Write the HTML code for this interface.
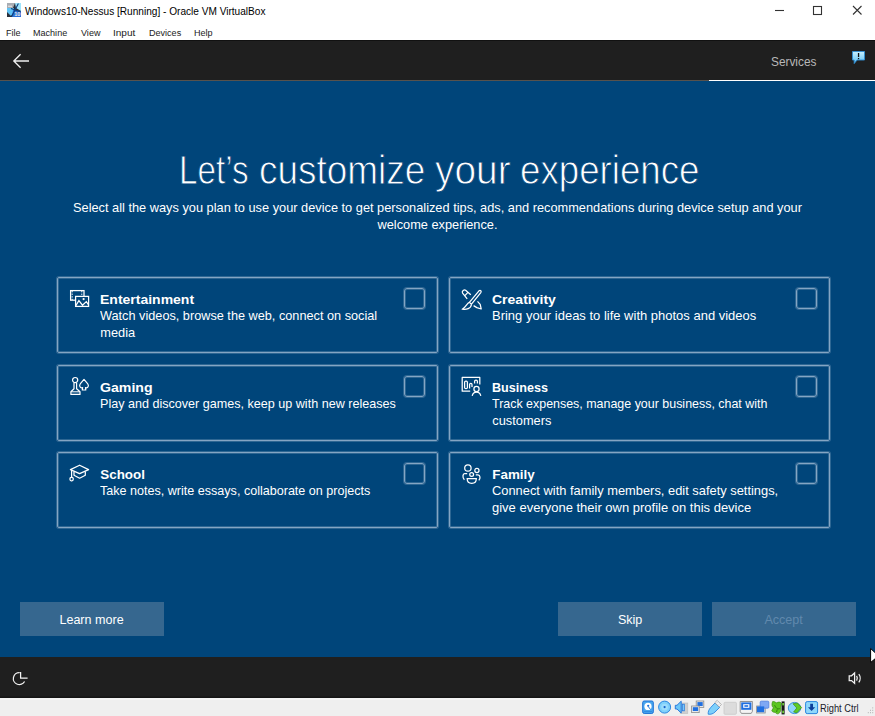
<!DOCTYPE html>
<html><head><meta charset="utf-8">
<style>
*{margin:0;padding:0;box-sizing:border-box}
html,body{width:875px;height:716px;overflow:hidden;background:#fff;font-family:"Liberation Sans",sans-serif}
.abs{position:absolute}
.t{position:absolute;white-space:nowrap;line-height:1}
#titlebar{left:0;top:0;width:875px;height:22px;background:#fff}
#menubar{left:0;top:22px;width:875px;height:18px;background:#fff}
#topdark{left:0;top:40px;width:875px;height:40px;background:#1f1f1f;border-top:1px solid #111}
#prog1{left:0;top:80px;width:709px;height:1px;background:#57524d}
#prog2{left:709.5px;top:79.6px;width:166px;height:2.2px;background:#fff}
#blue{left:0;top:81px;width:875px;height:576px;background:#00457a}
#botdark{left:0;top:657px;width:875px;height:41px;background:#1f1f1f;box-shadow:inset 0 -1.5px #161616}
#status{left:0;top:698px;width:875px;height:18px;background:#efefef;border-top:2px solid #f5f5f5}
.menu{font-size:9.05px;color:#222;top:29px}
.card{position:absolute;width:381px;height:76px;border:1px solid #84a5c3;border-radius:2px;box-shadow:0 0 0 1px rgba(132,165,195,.35),inset 0 0 0 1px rgba(132,165,195,.35)}
.card .cb{position:absolute;left:346.3px;top:10.4px;width:20.6px;height:20.6px;border:1px solid #84a5c3;border-radius:3px;box-shadow:0 0 0 1px rgba(132,165,195,.35),inset 0 0 0 1px rgba(132,165,195,.35)}
.card .ic{position:absolute;left:12px;top:12px;width:22px;height:20px;overflow:visible}
.card .ttl{position:absolute;transform-origin:0 0;left:42.3px;top:12.8px;font-size:13.4px;font-weight:bold;color:#fff;white-space:nowrap;line-height:17px}
.card .dsc div{transform-origin:0 0}
.card .dsc{position:absolute;left:42.3px;top:29.4px;white-space:nowrap;font-size:12.8px;color:#fff;line-height:17px}
.h1{top:149px;font-size:41.5px;color:#fff;transform-origin:0 0;-webkit-text-stroke:0.9px #00457a}
.btn{position:absolute;top:602px;width:144px;height:34px;background:#36678f;color:#fff;font-size:13.5px;text-align:center;line-height:34px}
.btn span{display:inline-block;transform:translateY(1.3px) scaleX(0.93)}
</style></head><body>
<div id="titlebar" class="abs"></div>
<div id="menubar" class="abs"></div>
<div id="topdark" class="abs"></div>
<div id="prog1" class="abs"></div>
<div id="prog2" class="abs"></div>
<div id="blue" class="abs"></div>
<div id="botdark" class="abs"></div>
<div id="status" class="abs"></div>

<!-- title bar -->
<svg class="abs" style="left:7px;top:3px" width="14" height="14" viewBox="0 0 14 14">
  <rect x="0" y="0" width="14" height="14" fill="#2a2f3a"/>
  <path d="M0 0 H8 L6 5 H0 Z" fill="#a9adb3"/>
  <path d="M1 3.2 H5" stroke="#fff" stroke-width=".8"/>
  <path d="M0 5 H7 L6 10 L4 13 L0 9 Z" fill="#5fc3f6"/>
  <path d="M8 0 H14 V8 L9 5 Z" fill="#9fe4fb"/>
  <path d="M6 7 L14 8 V14 H5 Z" fill="#2a6fd6"/>
  <path d="M4.6 13.5 L11.4 0.5 M4 5.6 L13.6 9" stroke="#0f3f7e" stroke-width="1.1"/>
  <text x="7.2" y="12.6" font-family="Liberation Sans" font-size="5.6" font-weight="bold" fill="#e8e8e8">10</text>
</svg>
<div class="t" style="left:25px;top:6.9px;font-size:10.1px;color:#000">Windows10-Nessus [Running] - Oracle VM VirtualBox</div>
<svg class="abs" style="left:774px;top:5px" width="90" height="12" viewBox="0 0 90 12">
  <path d="M1 5.5 H10" stroke="#333" stroke-width="1.1"/>
  <rect x="39.5" y="1.5" width="8" height="8" fill="none" stroke="#333" stroke-width="1.1"/>
  <path d="M79 1 L87.5 9.5 M87.5 1 L79 9.5" stroke="#333" stroke-width="1.1"/>
</svg>

<!-- menu -->
<div class="t menu" style="left:6px">File</div>
<div class="t menu" style="left:33px">Machine</div>
<div class="t menu" style="left:81px">View</div>
<div class="t menu" style="left:113.4px;transform-origin:0 0;transform:scaleX(1.11)">Input</div>
<div class="t menu" style="left:149px">Devices</div>
<div class="t menu" style="left:194px">Help</div>

<!-- top dark bar -->
<svg class="abs" style="left:11.7px;top:53px" width="18" height="16" viewBox="0 0 18 16">
  <path d="M17 8 H2 M8.6 1.2 L1.8 8 L8.6 14.8" fill="none" stroke="#f0f0f0" stroke-width="1.3"/>
</svg>
<div class="t" style="left:770.6px;top:56.2px;font-size:12.6px;color:#b8b8b8;transform-origin:0 0;transform:scaleX(0.94)">Services</div>
<svg class="abs" style="left:851px;top:50px" width="15" height="15" viewBox="0 0 15 15">
  <defs><linearGradient id="fb" x1="0" y1="0" x2="0" y2="1"><stop offset="0" stop-color="#c8f0ff"/><stop offset="1" stop-color="#58bdf2"/></linearGradient></defs>
  <path d="M1.5 1.5 H13.5 V10 H6 L3.2 13.6 V10 H1.5 Z" fill="url(#fb)" stroke="#2f8fd6" stroke-width="0.9"/>
  <rect x="6.9" y="3" width="1.3" height="4" fill="#111"/>
  <rect x="6.9" y="8" width="1.3" height="1.2" fill="#111"/>
</svg>

<!-- heading -->
<div class="t h1" style="left:178.8px;transform:scaleX(0.800)">Let’s</div><div class="t h1" style="left:259.2px;transform:scaleX(0.890)">customize</div><div class="t h1" style="left:435.1px;transform:scaleX(0.937)">your</div><div class="t h1" style="left:520.2px;transform:scaleX(0.884)">experience</div>
<div class="t" style="left:0;width:875px;text-align:center;top:198.6px;font-size:12.79px;color:#fff;line-height:17px;white-space:normal;padding:0 70px">Select all the ways you plan to use your device to get personalized tips, ads, and recommendations during device setup and your welcome experience.</div>

<!-- cards -->
<div class="card" style="left:57px;top:277px">
  <svg class="ic" viewBox="0 0 22 20"><g fill="none" stroke="#fff" stroke-width="1.25">
    <rect x="0.6" y="0.6" width="13.4" height="9.6"/><path d="M2.2 1 V10 M11.8 1 V10" stroke-dasharray="1.3 1.3" stroke-width="1"/>
    <rect x="5.6" y="6.4" width="13" height="10" fill="#00457a"/><path d="M5.8 15.6 L8.9 10.6 L12.5 15.2 L16.3 11.6 L18.4 14.6"/><circle cx="13.6" cy="9" r="0.5"/>
  </g></svg>
  <div class="ttl" style="transform:scaleX(1.045)">Entertainment</div>
  <div class="dsc"><div style="transform:scaleX(0.993)">Watch videos, browse the web, connect on social</div><div style="transform:scaleX(1.000)">media</div></div>
  <div class="cb"></div>
</div>
<div class="card" style="left:449px;top:277px">
  <svg class="ic" viewBox="0 0 22 20"><g fill="none" stroke="#fff" stroke-width="1.25" stroke-linejoin="round">
    <path d="M8.8 4.8 L3.6 0.2 C2.2 -1 -0.6 1.4 0.6 3.2 L5.2 8.8 M2.9 5.6 L5.9 2.4"/>
    <path d="M15.5 11.4 L18.2 14.4 L19.2 19 L14.8 17.6 L11.6 15.6"/>
    <path d="M9.5 14.2 L18.8 2.6 C19.8 1.2 18.4 -0.4 17 0.8 L7.4 12.4 Z" fill="#00457a"/>
    <path d="M7.4 12.4 C4.6 13.4 4.2 17.4 0.2 19.2 C4.4 19.8 9 18.6 9.5 14.2"/>
  </g></svg>
  <div class="ttl" style="transform:scaleX(1.046)">Creativity</div>
  <div class="dsc"><div style="transform:scaleX(1.015)">Bring your ideas to life with photos and videos</div></div>
  <div class="cb"></div>
</div>
<div class="card" style="left:57px;top:365px">
  <svg class="ic" viewBox="0 0 22 20"><g fill="none" stroke="#fff" stroke-width="1.2" stroke-linejoin="round">
    <circle cx="5.15" cy="2.1" r="2.6"/>
    <path d="M4 4.7 V10.8 L0.9 13.8 V16.4 H10 V13.8 L6.6 10.8 V4.7"/><path d="M1 13.8 H10" stroke-width="1"/>
    <path d="M14 1.4 L10.4 5.6 C8.6 7.8 10.4 10.6 12.6 9.6 L12.3 12 H15.8 L15.5 9.6 C17.8 10.6 19.4 7.8 17.6 5.6 Z"/>
  </g></svg>
  <div class="ttl" style="transform:scaleX(1.055)">Gaming</div>
  <div class="dsc"><div style="transform:scaleX(0.983)">Play and discover games, keep up with new releases</div></div>
  <div class="cb"></div>
</div>
<div class="card" style="left:449px;top:365px">
  <svg class="ic" viewBox="0 0 22 20"><g fill="none" stroke="#fff" stroke-width="1.25" stroke-linejoin="round">
    <path d="M8.2 13.2 H0.2 V-0.6 H17.8 V6.6"/>
    <rect x="2.6" y="3" width="2.8" height="7.6" rx="1.2"/><path d="M7.6 10.4 V6.6 C7.6 5 10 5 10 6.6 V9"/><path d="M12.6 5.6 V3.2 C12.6 1.6 15.4 1.6 15.4 3.2 V5.6"/>
    <circle cx="14.5" cy="10.9" r="2.6"/><path d="M10.2 17.8 C10.8 15.4 12.4 14.2 14.5 14.2 C16.6 14.2 18.2 15.4 18.8 17.8"/>
  </g></svg>
  <div class="ttl" style="transform:scaleX(0.940)">Business</div>
  <div class="dsc"><div style="transform:scaleX(0.972)">Track expenses, manage your business, chat with</div><div style="transform:scaleX(1.000)">customers</div></div>
  <div class="cb"></div>
</div>
<div class="card" style="left:57px;top:452px">
  <svg class="ic" viewBox="0 0 22 20"><g fill="none" stroke="#fff" stroke-width="1.25" stroke-linejoin="round">
    <path d="M0.4 4.6 L9.6 0.2 L18.6 4.6 L9.6 8.6 Z"/>
    <path d="M4 6.4 V10.2 L9.6 13.2 L15.3 10.2 V6.4"/>
    <path d="M1.6 4.8 V12.4"/><rect x="0" y="12.4" width="3.2" height="3.4" rx="1.2"/>
  </g></svg>
  <div class="ttl" style="transform:scaleX(1.000)">School</div>
  <div class="dsc"><div style="transform:scaleX(0.982)">Take notes, write essays, collaborate on projects</div></div>
  <div class="cb"></div>
</div>
<div class="card" style="left:449px;top:452px">
  <svg class="ic" viewBox="0 0 22 20"><g fill="none" stroke="#fff" stroke-width="1.25">
    <circle cx="5.9" cy="3" r="3.2"/><circle cx="14.9" cy="5.5" r="2.1"/><circle cx="9.65" cy="9.4" r="1.9"/>
    <path d="M5.2 8.5 H3 C0.6 8.6 0.2 12.6 2.4 14.8"/><path d="M13.8 9.9 H16 C18.4 10 18.6 13.6 16.8 15.4"/>
    <path d="M5.2 13.7 H14.3 C14.3 19.8 5.2 19.8 5.2 13.7 Z"/>
  </g></svg>
  <div class="ttl" style="transform:scaleX(1.000)">Family</div>
  <div class="dsc"><div style="transform:scaleX(1.006)">Connect with family members, edit safety settings,</div><div style="transform:scaleX(1.015)">give everyone their own profile on this device</div></div>
  <div class="cb"></div>
</div>

<!-- buttons -->
<div class="btn" style="left:20px"><span>Learn more</span></div>
<div class="btn" style="left:558px"><span>Skip</span></div>
<div class="btn" style="left:712px;color:#6189ad"><span>Accept</span></div>

<!-- bottom dark bar icons -->
<svg class="abs" style="left:10px;top:668px" width="20" height="20" viewBox="0 0 20 20">
  <g fill="none" stroke="#f2f2f2" stroke-width="1.25"><path d="M9.7 4.6 A6 6 0 1 0 14.6 13.5"/><path d="M10.6 4 V10.2 H17.6"/></g>
</svg>
<svg class="abs" style="left:846px;top:670px" width="18" height="16" viewBox="0 0 18 16">
  <g fill="none" stroke="#f2f2f2" stroke-width="1.25"><path d="M3.2 5.8 H5.5 L8.6 3 V13.3 L5.5 10.6 H3.2 Z"/><path d="M10.6 5.8 C11.5 7.2 11.5 9.2 10.6 10.6 M12.8 4.2 C14.6 6.5 14.6 10 12.8 12.3"/></g>
</svg>
<svg class="abs" style="left:869px;top:647px" width="6" height="17" viewBox="0 0 6 17"><path d="M1.6 1.5 L7 6.5 V11 L1.6 15.5 Z" fill="#fff" stroke="#000" stroke-width="1"/></svg>

<!-- status bar icons -->
<svg class="abs" style="left:640px;top:699px" width="235" height="17" viewBox="0 0 235 17">
  <!-- HDD -->
  <rect x="2.7" y="2" width="10.6" height="12.4" rx="1.5" fill="#49a6ee" stroke="#1a6fd6" stroke-width="1"/>
  <circle cx="8" cy="7.4" r="3.6" fill="#fff"/><circle cx="8.2" cy="6.8" r="1.1" fill="#1a6fd6"/>
  <path d="M8.6 8 L10.6 10.6" stroke="#1a6fd6" stroke-width="0.9"/>
  <rect x="4" y="12" width="8" height="1" fill="#1a6fd6" opacity=".5"/>
  <!-- CD -->
  <circle cx="24.6" cy="8.1" r="6" fill="#7fd0fb" stroke="#2a85e0" stroke-width="1"/>
  <circle cx="24.6" cy="8.1" r="3.4" fill="#9cdcfc"/><circle cx="24.6" cy="8.1" r="1.1" fill="#1560c8"/>
  <!-- Audio -->
  <rect x="40.2" y="4" width="7.6" height="10.5" fill="#cfcfcf" stroke="#bdbdbd" stroke-width=".6"/>
  <path d="M35.3 6.3 H37 L41.2 2.2 V14 L37 10 H35.3 Z" fill="#6cc6f7" stroke="#2878dc" stroke-width="1"/>
  <rect x="42.3" y="5.2" width="2" height="6.6" fill="#7fd2fb" stroke="#2878dc" stroke-width=".8"/>
  <!-- Network -->
  <rect x="56.2" y="2" width="7.6" height="6.4" fill="#e8e8e8" stroke="#8c8c8c" stroke-width=".8"/><rect x="57.4" y="3.1" width="5.3" height="3.9" fill="#1f6fe0"/>
  <rect x="51.6" y="7" width="7.6" height="6.6" fill="#e8e8e8" stroke="#8c8c8c" stroke-width=".8"/><rect x="52.8" y="8.2" width="5.3" height="3.8" fill="#1f6fe0"/>
  <!-- USB -->
  <path d="M68.2 15.2 C68 12.6 68.8 10.6 70.6 8.6 L75 4 L79.6 8.4 L75 13 C73.2 14.8 70.8 15.6 68.2 15.2 Z" fill="#7dd0fb" stroke="#2a86e0" stroke-width=".9"/>
  <path d="M74.8 3.6 L77.2 1.4 L81.4 5.6 L79.2 7.8 Z" fill="#f6f6f6" stroke="#9a9a9a" stroke-width=".7"/>
  <path d="M77 3.6 L77.6 3 M79 5.4 L79.6 4.8" stroke="#888" stroke-width=".6"/>
  <!-- shared folder -->
  <rect x="84" y="3.3" width="12.4" height="12" rx="1" fill="#dcdcdc" stroke="#c9c9c9" stroke-width=".8"/>
  <!-- display -->
  <path d="M100.2 2.5 H112.4 V12.4 L111.2 14.4 H101.4 L100.2 12.4 Z" fill="#f4f4f4" stroke="#7c7c7c" stroke-width=".8"/>
  <rect x="101.2" y="3.4" width="10.2" height="7.4" fill="#1f6fe0"/><rect x="103.2" y="5.2" width="6.2" height="3.6" fill="#fff"/><rect x="104.4" y="6.2" width="3.8" height="1.6" fill="#1f6fe0"/>
  <!-- video capture -->
  <rect x="116.6" y="7" width="8.6" height="7" fill="#e4e4e4" stroke="#8c8c8c" stroke-width=".8"/>
  <rect x="120.2" y="2.2" width="8.6" height="7" rx="1" fill="#7fa8f4" stroke="#4f7fe0" stroke-width=".8"/>
  <rect x="117" y="7.4" width="7.2" height="5.8" fill="#1f6fe0"/>
  <!-- green -->
  <path d="M132.6 2.6 C134.6 2.2 135.6 3.6 136.6 3.8 C138.4 2.6 140.6 3 141.4 4.4 L140.8 8.6 C141.2 11 140.4 13.6 138.6 14.6 C137.4 15.4 135.6 14.2 135 13.2 C133.6 13.6 132.2 12.8 131.8 11.6 L133.4 8.8 C132 7.6 131.4 5.6 132.6 2.6 Z" fill="#5cc620" stroke="#3b8c10" stroke-width=".7"/>
  <path d="M134.6 6.2 C135.8 8.6 137 10.6 139.8 9.6 M137.2 10.4 L136.6 13" fill="none" stroke="#2f7a0c" stroke-width=".9"/>
  <rect x="141.6" y="2.4" width="3" height="13" fill="#151515"/><rect x="142.4" y="4" width="1.4" height="2.4" fill="#7ef040"/><rect x="142.4" y="11.6" width="1.4" height="2.6" fill="#7ef040"/>
  <!-- blue/green circle -->
  <ellipse cx="154.5" cy="9" rx="6.2" ry="5.6" fill="#8ed6fb" stroke="#2f8ae0" stroke-width=".9"/>
  <path d="M153 4.8 L157.4 4 L161.6 8.6 L157 13.8 L153.6 13 L156.8 9 Z" fill="#5fcc26" stroke="#3b8e12" stroke-width=".7"/>
  <!-- down arrow -->
  <rect x="165.6" y="2.6" width="12" height="12" rx="1.6" fill="#8fd8fb" stroke="#2a86e0" stroke-width="1"/>
  <path d="M170.2 4.8 H173 V8.2 H175.2 L171.6 12 L168 8.2 H170.2 Z" fill="#0c3f9a"/>
  <!-- grip -->
  <g fill="#b0b0b0"><rect x="232.2" y="8.4" width="1" height="1"/><rect x="230" y="10.8" width="1" height="1"/><rect x="232.2" y="10.8" width="1" height="1"/><rect x="227.8" y="13.2" width="1" height="1"/><rect x="230" y="13.2" width="1" height="1"/><rect x="232.2" y="13.2" width="1" height="1"/></g>
</svg>
<div class="t" style="left:820.3px;top:703.5px;font-size:10.3px;color:#1a1a2a;transform-origin:0 0;transform:scaleX(0.9)">Right Ctrl</div>
</body></html>
